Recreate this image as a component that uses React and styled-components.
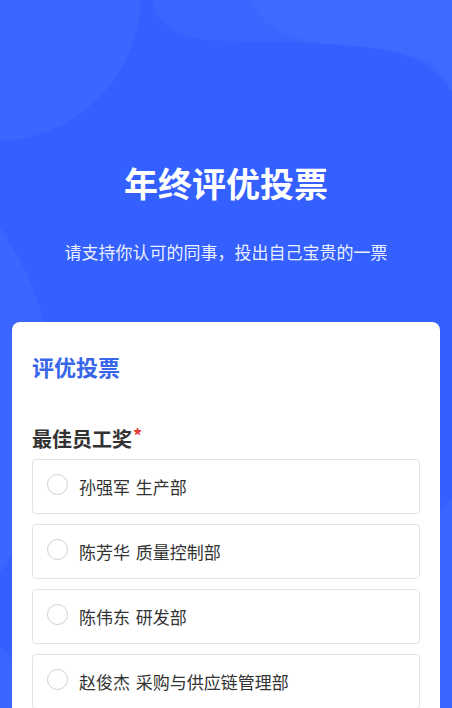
import styled, { createGlobalStyle } from "styled-components";

const GlobalStyle = createGlobalStyle`
  * { box-sizing: border-box; }
  body {
    margin: 0;
    background: #3360ff;
    font-family: "Noto Sans CJK SC", "Noto Sans", sans-serif;
  }
`;

const candidates = [
  "孙强军 生产部",
  "陈芳华 质量控制部",
  "陈伟东 研发部",
  "赵俊杰 采购与供应链管理部",
];

function Backdrop() {
  return (
    <Shapes viewBox="0 0 452 708" preserveAspectRatio="none">
      <circle cx="-5" cy="-5" r="146" fill="#fff" opacity="0.045" />
      <circle cx="-248" cy="400" r="302" fill="#fff" opacity="0.045" />
      <circle cx="-60" cy="740" r="110" fill="#fff" opacity="0.045" />
      <circle cx="700" cy="760" r="360" fill="#fff" opacity="0.045" />
      <path
        d="M152 0 C160 30 180 40 230 41 C300 42 380 44 420 58 C440 66 448 80 452 92 L452 0 Z"
        fill="#fff"
        opacity="0.035"
      />
      <path
        d="M250 0 C262 25 285 40 330 44 C390 48 430 55 452 92 L452 0 Z"
        fill="#fff"
        opacity="0.035"
      />
    </Shapes>
  );
}

function App() {
  return (
    <Page>
      <GlobalStyle />
      <Backdrop />
      <Header>
        <Title>年终评优投票</Title>
        <Subtitle>请支持你认可的同事，投出自己宝贵的一票</Subtitle>
      </Header>
      <Card>
        <CardTitle>评优投票</CardTitle>
        <Question>
          最佳员工奖<Required>*</Required>
        </Question>
        <Options>
          {candidates.map((name) => (
            <Option key={name}>
              <Radio />
              <OptionText>{name}</OptionText>
            </Option>
          ))}
        </Options>
      </Card>
    </Page>
  );
}

const Page = styled.div`
  position: relative;
  min-height: 708px;
  overflow: hidden;
  background: #3360ff;
`;

const Shapes = styled.svg`
  position: absolute;
  top: 0;
  left: 0;
  width: 452px;
  height: 708px;
  pointer-events: none;
`;

const Header = styled.div`
  position: relative;
  display: flex;
  flex-direction: column;
  align-items: center;
  padding-top: 163px;
`;

const Title = styled.h1`
  margin: 0;
  font-size: 34px;
  line-height: 40px;
  font-weight: 700;
  color: #fff;
`;

const Subtitle = styled.p`
  margin: 37px 0 0;
  font-size: 17px;
  line-height: 24px;
  color: rgba(255, 255, 255, 0.92);
`;

const Card = styled.div`
  position: relative;
  margin: 58px 12px 0;
  background: #fff;
  border-radius: 8px;
  padding: 29px 20px 20px;
  min-height: 400px;
`;

const CardTitle = styled.h2`
  margin: 0;
  font-size: 22px;
  line-height: 30px;
  font-weight: 700;
  color: #3766ea;
`;

const Question = styled.div`
  margin-top: 40px;
  font-size: 20px;
  line-height: 28px;
  font-weight: 700;
  color: #333;
`;

const Required = styled.span`
  color: #e53935;
  font-size: 18px;
  vertical-align: 4px;
  margin-left: 1px;
`;

const Options = styled.div`
  display: flex;
  flex-direction: column;
  gap: 10px;
  margin-top: 6px;
`;

const Option = styled.div`
  display: flex;
  align-items: center;
  height: 55px;
  padding: 0 14px;
  border: 1px solid #e3e3e3;
  border-radius: 4px;
`;

const Radio = styled.span`
  width: 21px;
  height: 21px;
  border-radius: 50%;
  border: 1.5px solid #cfcfcf;
  flex-shrink: 0;
  transform: translateY(-2px);
`;

const OptionText = styled.span`
  margin-left: 11px;
  font-size: 17px;
  line-height: 24px;
  color: #333;
  word-spacing: 2px;
`;

export default App;
